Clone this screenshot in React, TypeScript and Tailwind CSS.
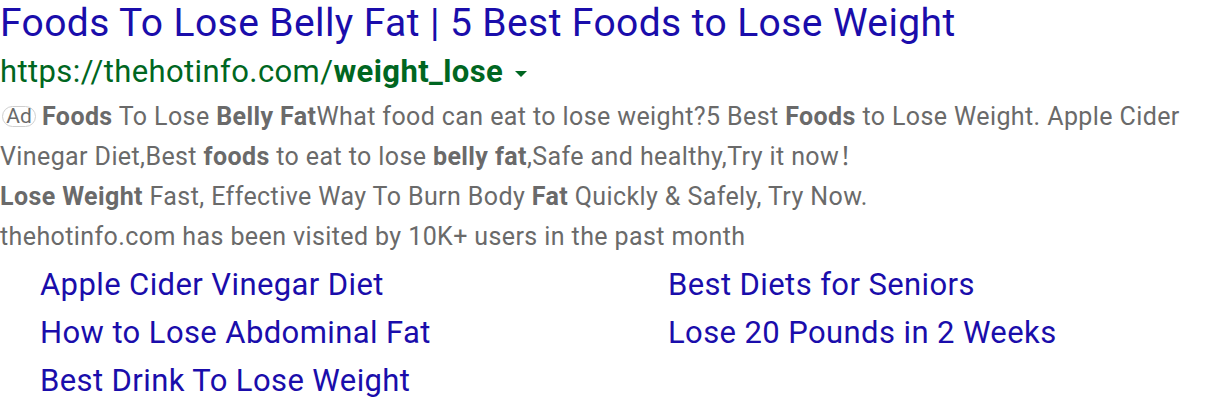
export default function App() {
  const sitelinks = [
    "Apple Cider Vinegar Diet",
    "Best Diets for Seniors",
    "How to Lose Abdominal Fat",
    "Lose 20 Pounds in 2 Weeks",
    "Best Drink To Lose Weight",
  ];

  return (
    <div className="bg-white w-[1216px] h-[410px] overflow-hidden font-['Roboto','Noto_Sans_CJK_SC',sans-serif] tracking-[0.4px]">
      <h1 className="text-[39px] leading-[46px] text-[#1a0dab] whitespace-nowrap">
        Foods To Lose Belly Fat | 5 Best Foods to Lose Weight
      </h1>
      <div className="flex items-center text-[31px] leading-[51px] text-[#006621] whitespace-nowrap">
        <span>
          https://thehotinfo.com/<b className="font-bold">weight_lose</b>
        </span>
        <span className="ml-[12px] mt-[4px] w-0 h-0 border-l-[6px] border-r-[6px] border-t-[6px] border-l-transparent border-r-transparent border-t-[#006621]" />
      </div>
      <div className="text-[25px] leading-[40px] text-[#6a6a6a]">
        <p>
          <span className="inline-flex items-center justify-center align-middle ml-[2px] mr-[6px] -mt-[4px] w-[34px] h-[21px] border border-[#cfcfcf] rounded-full text-[21px] leading-[21px] tracking-normal text-[#6a6a6a]">
            Ad
          </span>
          <b className="font-bold">Foods</b> To Lose <b className="font-bold">Belly Fat</b>What food can eat to lose
          weight?5 Best <b className="font-bold">Foods</b> to Lose Weight. Apple Cider Vinegar Diet,Best{" "}
          <b className="font-bold">foods</b> to eat to lose <b className="font-bold">belly fat</b>,Safe and healthy,Try it
          now！
        </p>
        <p>
          <b className="font-bold">Lose Weight</b> Fast, Effective Way To Burn Body <b className="font-bold">Fat</b>{" "}
          Quickly &amp; Safely, Try Now.
        </p>
        <p>thehotinfo.com has been visited by 10K+ users in the past month</p>
      </div>
      <div className="mt-[4px] grid grid-cols-[628px_1fr] pl-[40px] text-[31px] leading-[48px] text-[#1a0dab]">
        {sitelinks.map((s) => (
          <a key={s} className="whitespace-nowrap">
            {s}
          </a>
        ))}
      </div>
    </div>
  );
}
